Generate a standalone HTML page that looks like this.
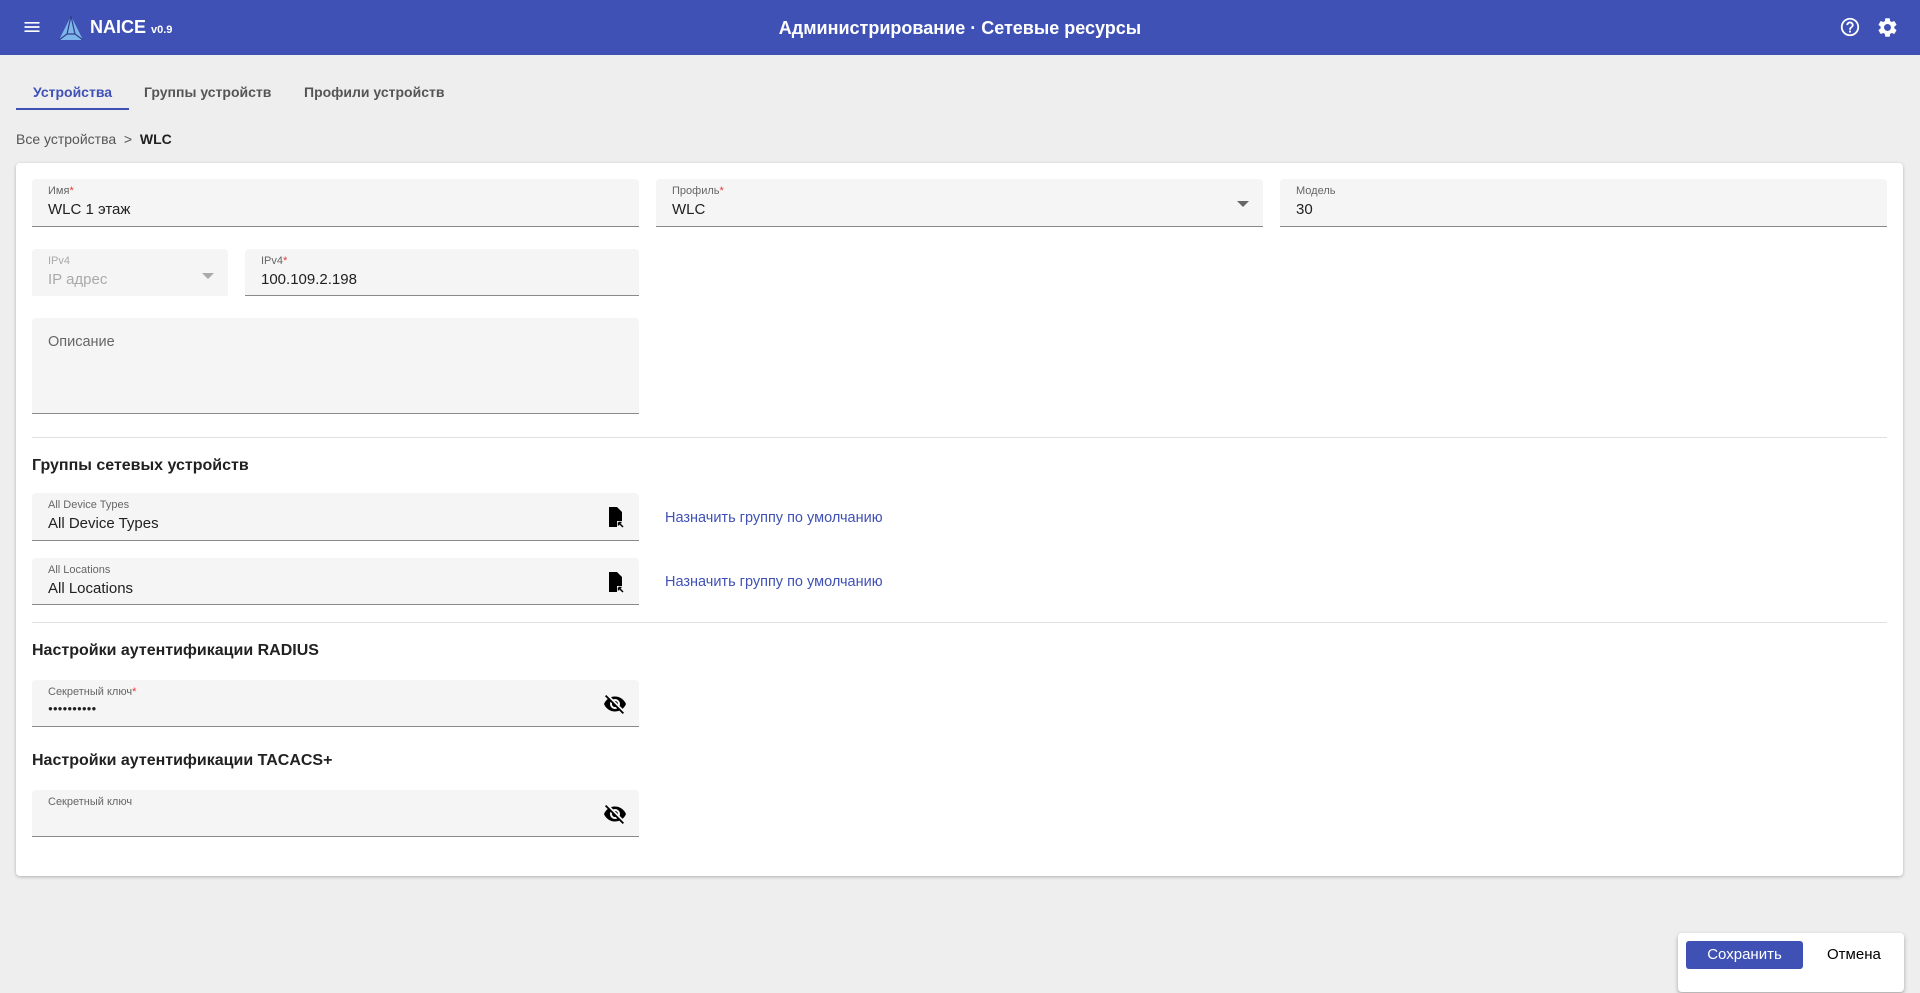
<!DOCTYPE html>
<html><head><meta charset="utf-8"><style>
*{box-sizing:border-box;margin:0;padding:0}
body{width:1920px;height:993px;background:#eeeeee;font-family:"Liberation Sans","DejaVu Sans",sans-serif;position:relative;overflow:hidden;color:#212121}
.hdr{position:absolute;left:0;top:0;width:1920px;height:55px;background:#3f51b5;color:#fff}
.abs{position:absolute}
.field{position:absolute;background:#f5f5f5;border-bottom:1px solid #8a8a8a;border-radius:4px 4px 0 0}
.lbl{position:absolute;left:16px;top:6px;font-size:11px;color:#666}
.val{position:absolute;left:16px;top:22px;font-size:15px;color:#212121}
.req{color:#e53935}
.h{position:absolute;left:32px;font-size:16px;font-weight:bold;color:#212121}
.div{position:absolute;left:32px;width:1855px;height:1px;background:#e0e0e0}
.link{position:absolute;left:665px;font-size:14.5px;color:#3f51b5}
.ic{position:absolute;right:12px;top:12px}
</style></head><body>
<div class="hdr">
 <svg class="abs" style="left:22px;top:17px" width="20" height="20" viewBox="0 0 24 24"><path d="M3 6h18v2H3zm0 5h18v2H3zm0 5h18v2H3z" fill="#fff"/></svg>
 <svg class="abs" style="left:57px;top:14px" width="28" height="28" viewBox="0 0 28 28"><path d="M14 2L26 26H2z" fill="#7fb6ea"/><path d="M14 2L10 20 2 26M14 2l4 18 8 6M10 20h8" stroke="#2f3f8f" stroke-width="1.2" fill="none"/></svg>
 <div class="abs" style="left:90px;top:17px;font-size:18px;font-weight:bold">NAICE <span style="font-size:11px">v0.9</span></div>
 <div class="abs" style="left:0;width:1920px;top:18px;text-align:center;font-size:18px;font-weight:bold">Администрирование · Сетевые ресурсы</div>
 <svg class="abs" style="left:1839px;top:16px" width="22" height="22" viewBox="0 0 24 24"><path fill="#fff" d="M11 18h2v-2h-2v2zm1-16C6.48 2 2 6.48 2 12s4.480 10 10 10 10-4.48 10-10S17.52 2 12 2zm0 18c-4.41 0-8-3.59-8-8s3.59-8 8-8 8 3.59 8 8-3.59 8-8 8zm0-14c-2.21 0-4 1.79-4 4h2c0-1.1.9-2 2-2s2 .9 2 2c0 2-3 1.75-3 5h2c0-2.25 3-2.5 3-5 0-2.21-1.79-4-4-4z"/></svg>
 <svg class="abs" style="left:1876px;top:16px" width="23" height="23" viewBox="0 0 24 24"><path fill="#fff" d="M19.14 12.94c.04-.3.06-.61.06-.94s-.02-.64-.07-.94l2.03-1.58a.49.49 0 00.12-.61l-1.92-3.32a.49.49 0 00-.59-.22l-2.39.96c-.5-.38-1.03-.7-1.62-.94l-.36-2.54a.48.48 0 00-.48-.41h-3.84c-.24 0-.43.17-.47.41l-.36 2.54c-.59.24-1.13.57-1.62.94l-2.39-.96a.48.48 0 00-.59.22L2.74 8.87c-.12.21-.08.47.12.61l2.03 1.58c-.05.3-.09.63-.09.94s.02.64.07.94l-2.03 1.58a.49.49 0 00-.12.61l1.92 3.32c.12.22.37.29.59.22l2.39-.96c.5.38 1.03.7 1.62.94l.36 2.54c.05.24.24.41.48.41h3.84c.24 0 .44-.17.47-.41l.36-2.54c.59-.24 1.13-.56 1.62-.94l2.39.96c.22.08.47 0 .59-.22l1.92-3.32c.12-.22.07-.47-.12-.61l-2.01-1.58zM12 15.6c-1.98 0-3.6-1.62-3.6-3.6s1.62-3.6 3.6-3.6 3.6 1.62 3.6 3.6-1.62 3.6-3.6 3.6z"/></svg>
</div>
<div class="abs" style="left:33px;top:84px;font-size:14px;font-weight:bold;color:#3f51b5">Устройства</div>
<div class="abs" style="left:16px;top:108px;width:113px;height:2px;background:#3f51b5"></div>
<div class="abs" style="left:144px;top:84px;font-size:14px;font-weight:bold;color:#555">Группы устройств</div>
<div class="abs" style="left:304px;top:84px;font-size:14px;font-weight:bold;color:#555">Профили устройств</div>
<div class="abs" style="left:16px;top:131px;font-size:14px;color:#555">Все устройства &nbsp;&gt;&nbsp; <span style="color:#212121;font-weight:bold">WLC</span></div>
<div class="abs" style="left:16px;top:163px;width:1887px;height:713px;background:#fff;border-radius:4px;box-shadow:0 1px 3px rgba(0,0,0,.25)"></div>

<div class="field" style="left:32px;top:179px;width:607px;height:48px"><div class="lbl">Имя<span class="req">*</span></div><div class="val">WLC 1 этаж</div></div>
<div class="field" style="left:656px;top:179px;width:607px;height:48px"><div class="lbl">Профиль<span class="req">*</span></div><div class="val">WLC</div><svg class="abs" style="right:14px;top:22px" width="12" height="6"><path d="M0 0h12L6 6z" fill="#666"/></svg></div>
<div class="field" style="left:1280px;top:179px;width:607px;height:48px"><div class="lbl">Модель</div><div class="val">30</div></div>

<div class="field" style="left:32px;top:249px;width:196px;height:47px;border-bottom-color:transparent"><div class="lbl" style="color:#aaa">IPv4</div><div class="val" style="color:#aaa">IP адрес</div><svg class="abs" style="right:14px;top:24px" width="12" height="6"><path d="M0 0h12L6 6z" fill="#aaa"/></svg></div>
<div class="field" style="left:245px;top:249px;width:394px;height:47px"><div class="lbl">IPv4<span class="req">*</span></div><div class="val">100.109.2.198</div></div>

<div class="field" style="left:32px;top:318px;width:607px;height:96px"><div class="val" style="top:16px;color:#666;font-size:14.5px">Описание</div></div>

<div class="div" style="top:437px"></div>
<div class="h" style="top:457px">Группы сетевых устройств</div>

<div class="field" style="left:32px;top:493px;width:607px;height:48px"><div class="lbl">All Device Types</div><div class="val">All Device Types</div><svg class="ic" width="24" height="24" viewBox="0 0 24 24"><path d="M6 2h8l5 5v9h-5v6H6z" fill="#000"/><path d="M15.5 17.5l4.5 4.5M15.5 17.5v3M15.5 17.5h3" stroke="#000" stroke-width="1.5" fill="none"/></svg></div>
<div class="link" style="top:510px">Назначить группу по умолчанию</div>
<div class="field" style="left:32px;top:558px;width:607px;height:47px"><div class="lbl">All Locations</div><div class="val">All Locations</div><svg class="ic" width="24" height="24" viewBox="0 0 24 24"><path d="M6 2h8l5 5v9h-5v6H6z" fill="#000"/><path d="M15.5 17.5l4.5 4.5M15.5 17.5v3M15.5 17.5h3" stroke="#000" stroke-width="1.5" fill="none"/></svg></div>
<div class="link" style="top:574px">Назначить группу по умолчанию</div>

<div class="div" style="top:622px"></div>
<div class="h" style="top:642px">Настройки аутентификации RADIUS</div>
<div class="field" style="left:32px;top:680px;width:607px;height:47px"><div class="lbl">Секретный ключ<span class="req">*</span></div><div class="val" style="font-size:8px;top:24px;letter-spacing:0px">●●●●●●●●●●</div>
<svg class="ic" style="top:12px" width="24" height="24" viewBox="0 0 24 24"><path fill="#000" d="M12 7c2.76 0 5 2.24 5 5 0 .65-.13 1.26-.36 1.83l2.92 2.92c1.51-1.26 2.7-2.89 3.43-4.75-1.73-4.39-6-7.5-11-7.5-1.4 0-2.74.25-3.98.7l2.16 2.16C10.74 7.13 11.35 7 12 7zM2 4.27l2.28 2.28.46.46A11.8 11.8 0 001 12c1.73 4.39 6 7.5 11 7.5 1.55 0 3.03-.3 4.38-.84l.42.42L19.73 22 21 20.73 3.27 3 2 4.27zM7.53 9.8l1.55 1.55c-.05.21-.08.43-.08.65 0 1.66 1.34 3 3 3 .22 0 .44-.03.65-.08l1.55 1.55c-.67.33-1.41.53-2.2.53-2.76 0-5-2.24-5-5 0-.79.2-1.53.53-2.2zm4.31-.78l3.15 3.15.02-.16c0-1.66-1.34-3-3-3l-.17.01z"/></svg></div>

<div class="h" style="top:752px">Настройки аутентификации TACACS+</div>
<div class="field" style="left:32px;top:790px;width:607px;height:47px"><div class="lbl">Секретный ключ</div>
<svg class="ic" style="top:12px" width="24" height="24" viewBox="0 0 24 24"><path fill="#000" d="M12 7c2.76 0 5 2.24 5 5 0 .65-.13 1.26-.36 1.83l2.92 2.92c1.51-1.26 2.7-2.89 3.43-4.75-1.73-4.39-6-7.5-11-7.5-1.4 0-2.74.25-3.98.7l2.16 2.16C10.74 7.13 11.35 7 12 7zM2 4.27l2.28 2.28.46.46A11.8 11.8 0 001 12c1.73 4.39 6 7.5 11 7.5 1.55 0 3.03-.3 4.38-.84l.42.42L19.73 22 21 20.73 3.27 3 2 4.27zM7.53 9.8l1.55 1.55c-.05.21-.08.43-.08.65 0 1.66 1.34 3 3 3 .22 0 .44-.03.65-.08l1.55 1.55c-.67.33-1.41.53-2.2.53-2.76 0-5-2.24-5-5 0-.79.2-1.53.53-2.2zm4.31-.78l3.15 3.15.02-.16c0-1.66-1.34-3-3-3l-.17.01z"/></svg></div>

<div class="abs" style="left:1678px;top:933px;width:226px;height:59px;background:#fff;border-radius:4px;box-shadow:0 2px 4px rgba(0,0,0,.3)"></div>
<div class="abs" style="left:1686px;top:941px;width:117px;height:28px;background:#3f51b5;border-radius:3px;color:#fff;font-size:15px;text-align:center;line-height:28px">Сохранить</div>
<div class="abs" style="left:1827px;top:941px;font-size:15px;line-height:28px;color:#000">Отмена</div>
</body></html>
